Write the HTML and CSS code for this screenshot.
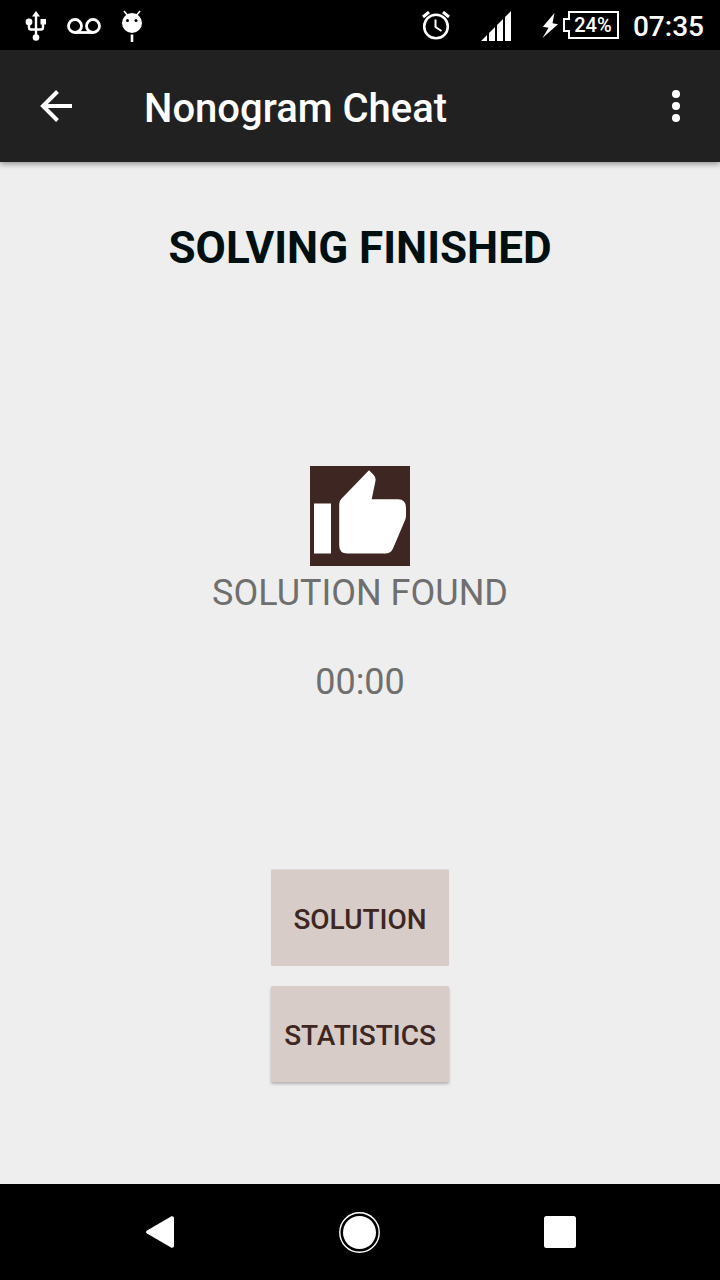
FILE: index.html
```html
<!DOCTYPE html>
<html lang="en">
<head>
<meta charset="utf-8">
<meta name="viewport" content="width=device-width, initial-scale=1">
<title>Nonogram Cheat</title>
<link rel="stylesheet" href="styles.css">
</head>
<body>
<div class="status-bar">
  <div class="notifications">
    <svg width="22" height="30" viewBox="0 0 22 30" fill="#fff" aria-label="USB">
      <path d="M11 0l4 5.500H7z"/>
      <circle cx="4" cy="11" r="3.400"/><rect x="15.500" y="8" width="5.500" height="5.500"/><circle cx="11" cy="26.500" r="3.300"/>
      <path d="M11 4v22M4 12v4.500q0 2 2 2h10q2 0 2-2v-4.500" fill="none" stroke="#fff" stroke-width="2.400"/>
    </svg>
    <svg width="34" height="16" viewBox="0 0 34 16" fill="none" stroke="#fff" stroke-width="2.800" aria-label="Voicemail">
      <circle cx="8" cy="8" r="6.500"/><circle cx="26" cy="8" r="6.500"/><path d="M8 14.500h18"/>
    </svg>
    <svg width="22" height="32" viewBox="0 0 22 32" aria-label="Debugging">
      <path d="M3 1l4 5M19 1l-4 5" stroke="#fff" stroke-width="1.600"/>
      <circle cx="11" cy="13" r="10" fill="#fff"/>
      <circle cx="6.500" cy="10.500" r="1.500"/><circle cx="15" cy="10.500" r="1.500"/>
      <path d="M11 24.500v7.500" stroke="#fff" stroke-width="2.600"/>
    </svg>
  </div>
  <div class="system">
    <svg class="alarm" width="30" height="30" viewBox="0 0 30 30" fill="none" stroke="#fff" aria-label="Alarm">
      <circle cx="15" cy="15.500" r="11.800" stroke-width="2.600"/>
      <path d="M2 6l6-5M28 6l-6-5" stroke-width="3"/>
      <path d="M14.500 8.500v7.500l6 4" stroke-width="2"/>
    </svg>
    <svg class="signal" width="30" height="30" viewBox="0 0 30 30" fill="#fff" aria-label="Signal">
      <path d="M0 30l6-6v6zM8 30v-8l6-6v14zM16 30V14l6-6v22zM24 30V6l6-6v30z"/>
    </svg>
    <svg class="bolt" width="16" height="26" viewBox="0 0 16 26" fill="#fff" aria-label="Charging">
      <path d="M12.500 0L.8 13.800l5.700 1L.5 25 16 11.200l-5.500-1z"/>
    </svg>
    <div class="battery">
      <svg class="battery-frame" width="56" height="28" viewBox="0 0 56 28" fill="none" stroke="#fff" stroke-width="2" aria-hidden="true">
        <path d="M6 1h49v26H6v-7H1V8h5z"/>
      </svg>
      <span class="battery-level">24%</span>
    </div>
    <span class="clock">07:35</span>
  </div>
</div>
<header class="app-bar">
  <button class="icon-button" type="button" aria-label="Back">
    <svg width="32" height="32" viewBox="0 0 32 32" fill="none" stroke="#fff" stroke-width="4"><path d="M32 16H3M17.500 1.500L3 16l14.500 14.500"/></svg>
  </button>
  <h1 class="app-title">Nonogram Cheat</h1>
  <button class="icon-button" type="button" aria-label="More options">
    <svg width="8" height="32" viewBox="0 0 8 32" fill="#fff"><circle cx="4" cy="4" r="4"/><circle cx="4" cy="16" r="4"/><circle cx="4" cy="28" r="4"/></svg>
  </button>
</header>
<main class="content">
  <h2 class="heading">SOLVING FINISHED</h2>
  <section class="result">
    <svg class="thumb" width="100" height="100" viewBox="0 0 100 100" fill="#fff" aria-hidden="true">
      <path d="M4 37.500h17v50H4zM29.200 38q0-3 2-5L59 4.200l4.500 4.500q2.500 2.500 2 6L61.700 33.300H88q8 0 8 8.500v8q0 2-.8 4L83 82.500q-2.200 5-7.500 5H37.500q-8.300 0-8.300-8z"/>
    </svg>
    <p class="result-text">SOLUTION FOUND</p>
    <p class="result-time">00:00</p>
  </section>
  <div class="actions">
    <button class="action flat" type="button">SOLUTION</button>
    <button class="action" type="button">STATISTICS</button>
  </div>
</main>
<nav class="nav-bar">
  <button class="nav-button" type="button" aria-label="Back">
    <svg width="28" height="32" viewBox="0 0 28 32" fill="#fff"><path d="M1 14.500L25.500.3Q28 0 28 2v28q0 2-2.500 1.700L1 17.500q-2-1.500 0-3z"/></svg>
  </button>
  <button class="nav-button" type="button" aria-label="Home">
    <svg width="42" height="42" viewBox="0 0 42 42"><circle cx="20.500" cy="21.500" r="19.700" fill="none" stroke="#fff" stroke-width="1.400"/><circle cx="20.500" cy="21.500" r="16.500" fill="#fff"/></svg>
  </button>
  <button class="nav-button" type="button" aria-label="Recent apps">
    <svg width="32" height="32" viewBox="0 0 32 32" fill="#fff"><rect width="32" height="32" rx="2.500"/></svg>
  </button>
</nav>
</body>
</html>
```
FILE: styles.css
```css
* {
  box-sizing: border-box;
}

body {
  margin: 0;
  min-height: 100vh;
  display: flex;
  flex-direction: column;
  background: #eee;
  font-family: Roboto, "Liberation Sans", sans-serif;
}

svg {
  display: block;
  flex: none;
}

button {
  border: 0;
  padding: 0;
  font-family: inherit;
  cursor: pointer;
}

h1, h2, p {
  margin: 0;
}

.status-bar {
  height: 50px;
  padding: 2px 16px 0 25px;
  display: flex;
  align-items: center;
  justify-content: space-between;
  background: #000;
  color: #fff;
}

.notifications,
.system {
  display: flex;
  align-items: center;
}

.notifications {
  gap: 20px;
}

.alarm {
  margin-right: 30px;
}

.signal {
  margin-right: 31px;
}

.bolt {
  margin-right: 5px;
}

.battery {
  position: relative;
  margin: -2px 14px 0 0;
}

.battery-level {
  position: absolute;
  inset: 0 0 0 4px;
  line-height: 28px;
  text-align: center;
  font-size: 20px;
  font-weight: 500;
}

.clock {
  padding-top: 2px;
  font-size: 28px;
  font-weight: 500;
  line-height: 32px;
}

.app-bar {
  height: 112px;
  padding: 0 16px;
  display: flex;
  align-items: center;
  background: #212121;
  color: #fff;
  box-shadow: 0 2px 6px rgba(0, 0, 0, 0.4);
}

.icon-button {
  width: 80px;
  height: 80px;
  display: flex;
  align-items: center;
  justify-content: center;
  background: none;
}

.app-bar .icon-button:last-child {
  width: 56px;
}

.app-title {
  flex: 1;
  padding: 6px 0 0 48px;
  font-size: 40px;
  font-weight: 500;
  line-height: 48px;
}

.content {
  flex: 1;
  padding: 60px 16px 102px;
  display: flex;
  flex-direction: column;
  align-items: center;
}

.heading {
  color: #001010;
  font-size: 44px;
  font-weight: 700;
  line-height: 52px;
}

.result {
  flex: 1;
  padding-top: 31px;
  display: flex;
  flex-direction: column;
  align-items: center;
  justify-content: center;
  color: #6f6f6f;
  font-size: 36px;
  line-height: 54px;
}

.thumb {
  background: #3e2723;
}

.result-time {
  margin-top: 35px;
}

.actions {
  display: grid;
  gap: 20px;
}

.action {
  height: 96px;
  padding: 2px 13px 0;
  background: #d7ccc8;
  color: #3e2723;
  border-radius: 1px;
  font-size: 28px;
  font-weight: 500;
  box-shadow: 0 2px 3px rgba(0, 0, 0, 0.25);
}

.action.flat {
  box-shadow: 0 -1px 1px rgba(0, 0, 0, 0.08);
}

.nav-bar {
  height: 96px;
  padding: 0 60px;
  display: grid;
  grid-template-columns: repeat(3, 1fr);
  background: #000;
}

.nav-button {
  display: flex;
  align-items: center;
  justify-content: center;
  background: none;
}
```
